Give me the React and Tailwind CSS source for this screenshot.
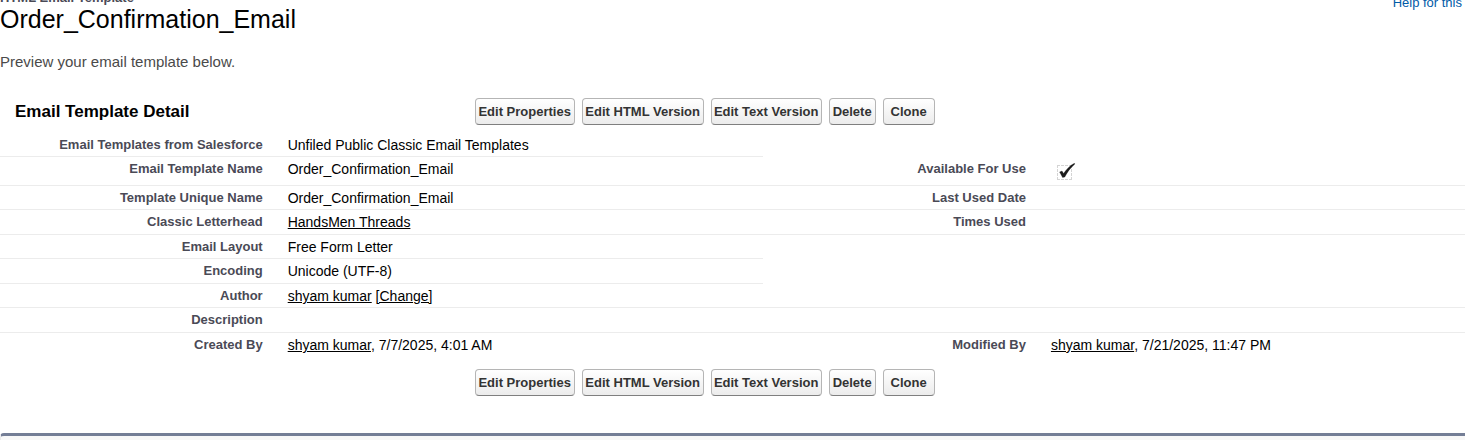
const actions = [
  { label: 'Edit Properties', width: 'w-[100px]' },
  { label: 'Edit HTML Version', width: 'w-[122px]' },
  { label: 'Edit Text Version', width: 'w-[111px]' },
  { label: 'Delete', width: 'w-[47px]' },
  { label: 'Clone', width: 'w-[52px]' },
];

function Actions() {
  return (
    <div className="flex gap-[7px]">
      {actions.map((a) => (
        <button
          key={a.label}
          type="button"
          className={`${a.width} flex h-[27px] items-center justify-center rounded-[4px] border border-[#b5b5b5] border-b-[#7f7f7f] bg-linear-to-b from-white to-[#ececec] text-[13px] leading-4 font-bold whitespace-nowrap text-[#333333]`}
        >
          {a.label}
        </button>
      ))}
    </div>
  );
}

function TextLink({ children }) {
  return (
    <a href="#" className="underline">
      {children}
    </a>
  );
}

function CheckMark() {
  return (
    <span className="relative mt-2 ml-1.5 block size-[15px]">
      <input
        id="available"
        type="checkbox"
        defaultChecked
        className="block size-[15px] appearance-none border border-dashed border-[#d4d4d4] bg-white"
      />
      <svg
        viewBox="0 0 20 18"
        className="pointer-events-none absolute -top-0.5 left-0 h-[18px] w-5"
        aria-hidden="true"
      >
        <path
          d="M2.6 9 L5 8 L6.6 10.6 C9 6.8 12.6 2.6 17.4 0.2 L17.9 0.9 C13.6 4.6 10.4 8.8 7.8 14 L5.6 14.5 Z"
          fill="#1a1a1a"
          stroke="#1a1a1a"
          strokeWidth="0.3"
          strokeLinejoin="round"
        />
      </svg>
    </span>
  );
}

const rows = [
  { height: 'h-6', label: 'Email Templates from Salesforce', value: 'Unfiled Public Classic Email Templates' },
  {
    height: 'h-[29px]',
    label: 'Email Template Name',
    value: 'Order_Confirmation_Email',
    label2: <label htmlFor="available">Available For Use</label>,
    value2: <CheckMark />,
  },
  { height: 'h-6', label: 'Template Unique Name', value: 'Order_Confirmation_Email', label2: 'Last Used Date' },
  { height: 'h-[25px]', label: 'Classic Letterhead', value: <TextLink>HandsMen Threads</TextLink>, label2: 'Times Used' },
  { height: 'h-6', label: 'Email Layout', value: 'Free Form Letter' },
  { height: 'h-[25px]', label: 'Encoding', value: 'Unicode (UTF-8)' },
  {
    height: 'h-6',
    label: 'Author',
    value: (
      <>
        <TextLink>shyam kumar</TextLink> <TextLink>[Change]</TextLink>
      </>
    ),
    wide: true,
  },
  { height: 'h-[25px]', label: 'Description', wide: true },
  {
    height: 'h-6',
    label: 'Created By',
    value: (
      <>
        <TextLink>shyam kumar</TextLink>, 7/7/2025, 4:01 AM
      </>
    ),
    label2: 'Modified By',
    value2: (
      <>
        <TextLink>shyam kumar</TextLink>, 7/21/2025, 11:47 PM
      </>
    ),
    last: true,
  },
];

const labelCell = 'pt-1 pr-px text-right align-top text-[13px] leading-4 font-bold text-[#4a4a56]';
const valueCell = 'pt-1 pl-6 text-left align-top text-[14px] leading-[17px] text-black';

function DetailTable() {
  return (
    <table className="w-full table-fixed border-separate border-spacing-0">
      <colgroup>
        <col className="w-[18%]" />
        <col className="w-[34.1%]" />
        <col className="w-[18%]" />
        <col />
      </colgroup>
      <tbody>
        {rows.map((r) => {
          const line = r.last ? '' : 'border-b border-[#ececec]';
          return (
            <tr key={r.label} className={r.height}>
              <th scope="row" className={`${labelCell} ${line}`}>
                {r.label}
              </th>
              <td colSpan={r.wide ? 3 : 1} className={`${valueCell} ${line}`}>
                {r.value}
              </td>
              {r.label2 && (
                <>
                  <th scope="row" className={`${labelCell} ${line}`}>
                    {r.label2}
                  </th>
                  <td className={r.value2 && !r.last ? `pl-6 align-top ${line}` : `${valueCell} ${line}`}>{r.value2}</td>
                </>
              )}
              {!r.label2 && !r.wide && <td colSpan={2} />}
            </tr>
          );
        })}
      </tbody>
    </table>
  );
}

export default function App() {
  return (
    <div className="overflow-hidden bg-white font-['Liberation_Sans',Arial,sans-serif] text-black">
      <header>
        <div className="flex h-[10px] items-end justify-between overflow-hidden">
          <p className="pb-1 text-[13px] leading-4 font-bold text-[#4a4a56]">HTML Email Template</p>
          <a href="#" className="pr-[3px] text-[13px] leading-[14px] text-[#015ba7]">
            Help for this
          </a>
        </div>
        <h1 className="text-[25px] leading-[18px]">Order_Confirmation_Email</h1>
        <p className="mt-[25px] text-[15px] leading-[18px] text-[#4a4a4a]">Preview your email template below.</p>
      </header>
      <main className="mt-[27px]">
        <div className="flex items-center">
          <h2 className="w-[32.4%] pl-[15px] text-[17px] leading-5 font-bold">Email Template Detail</h2>
          <Actions />
        </div>
        <div className="mt-2">
          <DetailTable />
        </div>
        <div className="mt-3 pl-[32.4%]">
          <Actions />
        </div>
      </main>
      <section className="mt-[37px] h-[7px] rounded-tl-[4px] border-t-3 border-l border-t-[#747e96] border-l-[#eaeaea] bg-[#f8f8f8]" />
    </div>
  );
}
